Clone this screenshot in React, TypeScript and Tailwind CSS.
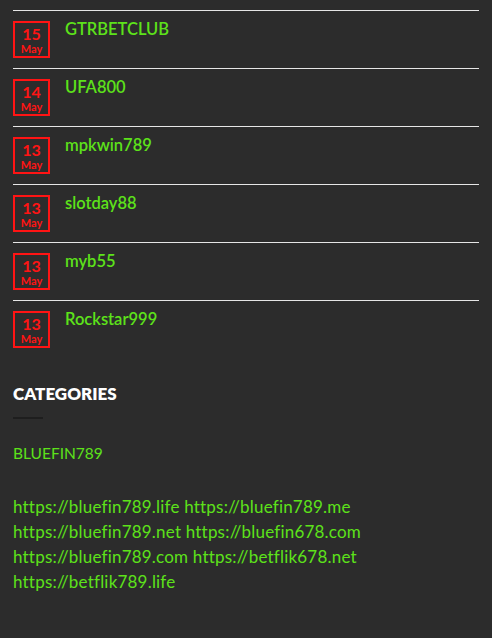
import React from "react";

interface Post {
  day: string;
  month: string;
  title: string;
}

const posts: Post[] = [
  { day: "15", month: "May", title: "GTRBETCLUB" },
  { day: "14", month: "May", title: "UFA800" },
  { day: "13", month: "May", title: "mpkwin789" },
  { day: "13", month: "May", title: "slotday88" },
  { day: "13", month: "May", title: "myb55" },
  { day: "13", month: "May", title: "Rockstar999" },
];

const links = [
  "https://bluefin789.life https://bluefin789.me",
  "https://bluefin789.net https://bluefin678.com",
  "https://bluefin789.com https://betflik678.net",
  "https://betflik789.life",
];

export default function App() {
  return (
    <div className="min-h-[638px] w-full bg-[#2c2c2c] px-[13px] pt-[10px] pb-6 font-['Lato',sans-serif]">
      {/* recent posts */}
      <ul>
        {posts.map((post, i) => (
          <li key={i} className="flex gap-[15px] border-t border-[#e6e6e6] pt-[10px] pb-[10px]">
            <div className="flex h-[37px] w-[37px] shrink-0 flex-col items-center justify-center border-2 border-[#ff1414] text-[#ff1414] leading-none">
              <span className="text-[16px] font-bold">{post.day}</span>
              <span className="mt-[1px] text-[11px] font-bold">{post.month}</span>
            </div>
            <a href="#" className="text-[16.5px] font-semibold leading-none text-[#5de21a]">
              {post.title}
            </a>
          </li>
        ))}
      </ul>

      {/* categories */}
      <h3 className="mt-[24px] text-[17px] font-extrabold leading-6 text-white">CATEGORIES</h3>
      <div className="mt-[11px] h-[2px] w-[30px] bg-[#1e1e1e]" />
      <a href="#" className="mt-[24px] block text-[15.5px] leading-5 text-[#5de21a]">BLUEFIN789</a>

      <div className="mt-[31px] text-[17px] leading-[25px] tracking-[0.2px] text-[#5de21a]">
        {links.map((line, i) => (
          <div key={i}>{line}</div>
        ))}
      </div>
    </div>
  );
}
